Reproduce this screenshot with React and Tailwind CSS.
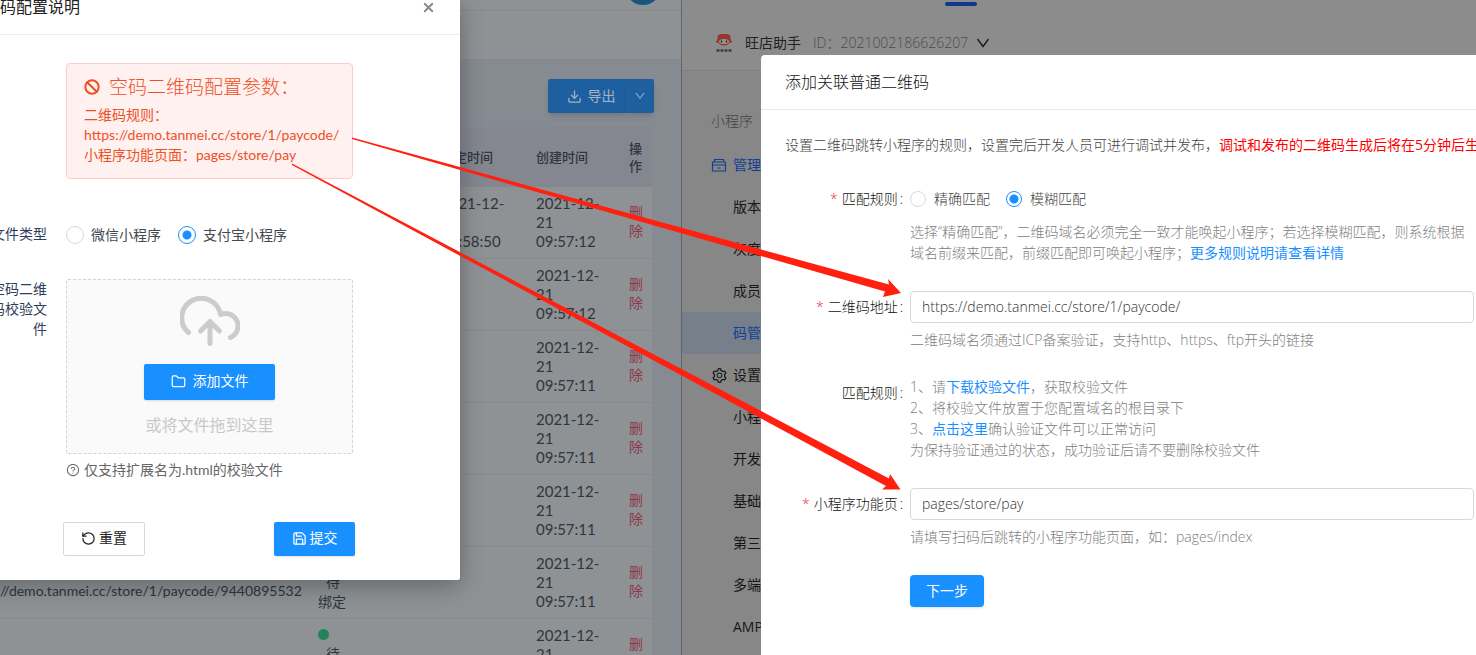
import {
  AiOutlineDown,
  AiOutlineQuestionCircle,
  AiOutlineSetting,
} from "react-icons/ai";
import { FiDownload, FiSave } from "react-icons/fi";
import { Ban, Folder, RotateCcw, X } from "lucide-react";

const rows = [
  { bound: "2021-12-21 09:58:50", created: "2021-12-21 09:57:12" },
  { created: "2021-12-21 09:57:12" },
  { created: "2021-12-21 09:57:11" },
  { created: "2021-12-21 09:57:11" },
  { created: "2021-12-21 09:57:11" },
  {
    url: "//demo.tanmei.cc/store/1/paycode/9440895532",
    waiting: true,
    created: "2021-12-21 09:57:11",
  },
  { waiting: true, created: "2021-12-21 09:57:11" },
];

const menu = [
  { text: "管理", icon: "box" },
  { text: "版本" },
  { text: "灰度" },
  { text: "成员" },
  { text: "码管", active: true },
  { text: "设置", icon: "gear" },
  { text: "小程" },
  { text: "开发" },
  { text: "基础" },
  { text: "第三" },
  { text: "多端" },
  { text: "AMP" },
];

function BoxIcon() {
  return (
    <svg viewBox="0 0 16 16" className="h-4 w-4" fill="none" stroke="currentColor" strokeWidth="1.2">
      <path d="M1.500 5h13v9h-13zM3.500 5V2.500h9V5M1.500 8h13M6.500 11h3" />
    </svg>
  );
}

function CloudIcon() {
  return (
    <svg
      viewBox="0 0 60 50"
      className="h-[50px] w-[60px] text-[#cccccc]"
      fill="none"
      stroke="currentColor"
      strokeWidth="5"
      strokeLinecap="round"
      strokeLinejoin="round"
    >
      <path d="M8.500 36.500A19.500 19.500 0 1 1 40.500 18.500A12.500 12.500 0 0 1 50.500 41.500" />
      <path d="M30 47.500V26M20.500 35L30 25.500L39.500 35" />
    </svg>
  );
}

function ShopLogo() {
  return (
    <svg viewBox="0 0 18 20" className="h-5 w-[18px]">
      <path d="M2.500 8V4Q3 1 6 1h6q3 0 3.500 3v4z" fill="#94392d" />
      <path d="M0.500 9L3 6v4zM17.500 9L15 6v4z" fill="#94392d" />
      <ellipse cx="9" cy="8.500" rx="6" ry="4" fill="#94392d" />
      <ellipse cx="9" cy="8.500" rx="5" ry="2.600" fill="#969087" />
      <path d="M6.500 7.500v2M11.500 7.500v2" stroke="#222" strokeWidth="1.200" />
      <path d="M1.500 17.500H16.500" stroke="#3d3d3d" strokeWidth="2.500" strokeDasharray="3 1" />
    </svg>
  );
}

function AdminWindow() {
  return (
    <section className="relative min-h-screen w-[681px] shrink-0 bg-[#868a91] font-['Lato','Noto_Sans_CJK_SC',sans-serif] text-[#30353f]">
      <div className="flex h-[11px] items-end justify-end border-b border-[#868a8c] bg-[#8e9294] pr-5">
        <span className="mb-[5px] h-9 w-9 shrink-0 rounded-full bg-[#17557f]" />
      </div>
      <div className="h-12 bg-[#8e9294]" />

      <div className="flex justify-end pr-[27px] pt-5">
        <button className="flex h-[34px] w-[78px] items-center justify-center gap-[6px] rounded-l-xs bg-[#1e609f] pl-2 text-sm text-[#a5b4c3] shadow-md">
          <FiDownload size={15} />
          导出
        </button>
        <button
          className="flex h-[34px] w-7 items-center justify-center rounded-r-xs bg-[#1e609f] text-[#a5b4c3] shadow-md"
          aria-label="more"
        >
          <AiOutlineDown size={12} />
        </button>
      </div>

      <div className="pr-[29px]">
        <table className="mt-[14px] w-full table-fixed border-separate border-spacing-0 text-left text-[15px] leading-[19px]">
          <colgroup>
            <col />
            <col className="w-[123px]" />
            <col className="w-[95px]" />
            <col className="w-[93px]" />
            <col className="w-[23px]" />
          </colgroup>
          <thead className="bg-[#848790] text-[13px] leading-[18px]">
            <tr className="h-[60px]">
              <th />
              <th />
              <th className="font-medium">绑定时间</th>
              <th className="font-medium">创建时间</th>
              <th className="pr-2 font-medium">操作</th>
            </tr>
          </thead>
          <tbody className="bg-[#8e9294]">
            {rows.map((row, i) => (
              <tr key={i} className="h-[72px]">
                <td className="border-b border-[#868a8d] pt-4 text-sm">{row.url}</td>
                <td className="border-b border-[#868a8d] pt-1 text-sm">
                  {row.waiting && (
                    <div className="w-8">
                      <span className="block h-[11px] w-[11px] rounded-full bg-[#24825d]" />
                      <span className="mt-1 block pl-2">待</span>
                      <span>绑定</span>
                    </div>
                  )}
                </td>
                <td className="border-b border-[#868a8d] pr-6">{row.bound}</td>
                <td className="border-b border-[#868a8d] pr-5">{row.created}</td>
                <td className="border-b border-[#868a8d] pb-1">
                  <a href="#" className="block w-4 text-sm leading-[19px] text-[#8f384a]">
                    删除
                  </a>
                </td>
              </tr>
            ))}
          </tbody>
        </table>
      </div>

      <ConfigDialog />
    </section>
  );
}

function ConfigDialog() {
  return (
    <div
      role="dialog"
      className="absolute -left-10 top-0 w-[500px] rounded-b-xs bg-white pb-6 shadow-[0_6px_24px_rgba(0,0,0,0.3)]"
    >
      <div className="flex h-[35px] items-start justify-between border-b border-[#ececec] pl-10 pr-6">
        <h2 className="text-base leading-[14px] text-[#222222]">码配置说明</h2>
        <button className="text-[#888888]" aria-label="close">
          <X size={15} strokeWidth={3} />
        </button>
      </div>

      <div className="ml-[106px] mr-[107px] mt-7 rounded-sm border border-[#ffccc7] bg-[#fff1f0] pb-[13px] pl-[17px] pt-[11px] text-sm leading-5 text-[#ed5025]">
        <h3 className="mb-[6px] flex items-center gap-[9px] text-[19px] font-light leading-6">
          <Ban size={16} strokeWidth={3} />
          空码二维码配置参数：
        </h3>
        <p>二维码规则：</p>
        <p>https://demo.tanmei.cc/store/1/paycode/</p>
        <p>小程序功能页面：pages/store/pay</p>
      </div>

      <fieldset className="mt-11 flex h-6 items-center text-sm text-[#444950]">
        <span className="w-[87px] pb-[2px] text-right leading-5 text-[#2f3d5c]">文件类型</span>
        <label className="ml-[19px] flex items-center gap-[7px]">
          <Radio name="fileType" size="lg" />
          微信小程序
        </label>
        <label className="ml-[17px] flex items-center gap-[7px]">
          <Radio name="fileType" size="lg" checked />
          支付宝小程序
        </label>
      </fieldset>

      <div className="mt-8 flex text-sm">
        <span className="w-[87px] pl-[30px] text-right leading-5 text-[#2f3d5c]">
          空码二维码校验文件
        </span>
        <div className="ml-[19px] w-[287px]">
          <div className="flex h-[175px] flex-col items-center rounded-xs border border-dashed border-[#d4d4d4] bg-[#fafafa] pt-4">
            <CloudIcon />
            <button className="mt-[18px] flex h-9 w-[131px] items-center justify-center gap-[7px] rounded-xs bg-[#1890ff] pb-[2px] text-white shadow">
              <Folder size={15} strokeWidth={2} />
              添加文件
            </button>
            <p className="mt-[13px] text-base text-[#c8c8c8]">或将文件拖到这里</p>
          </div>
          <p className="mt-[6px] flex items-center gap-1 leading-5 text-[#666666]">
            <AiOutlineQuestionCircle size={14} />
            仅支持扩展名为.html的校验文件
          </p>
        </div>
      </div>

      <div className="ml-[103px] mr-[105px] mt-[42px] flex justify-between text-sm">
        <button className="flex h-[34px] w-[82px] items-center justify-center gap-[3px] rounded-xs border border-[#d9d9d9] pb-[2px] text-[#222222]">
          <RotateCcw size={15} strokeWidth={2} />
          重置
        </button>
        <button className="flex h-[34px] w-[81px] items-center justify-center gap-[3px] rounded-xs bg-[#1890ff] pb-[2px] text-white shadow">
          <FiSave size={15} />
          提交
        </button>
      </div>
    </div>
  );
}

function Radio({ name, size, checked }) {
  return (
    <input
      type="radio"
      name={name}
      defaultChecked={checked}
      className={
        (size === "lg" ? "h-[18px] w-[18px] " : "h-4 w-4 ") +
        "shrink-0 appearance-none rounded-full border border-[#d9d9d9] bg-white checked:border-[#1890ff] checked:bg-[radial-gradient(circle,#1890ff_4px,#ffffff_5px)]"
      }
    />
  );
}

function Label({ text, required, htmlFor }) {
  return (
    <label
      htmlFor={htmlFor}
      className="block w-[142px] shrink-0 whitespace-nowrap text-right text-[#111111]"
    >
      {required && <span className="mr-1 text-[#f5222d]">*</span>}
      {text}
      <span className="ml-[2px]">:</span>
    </label>
  );
}

function ConsoleWindow() {
  return (
    <section className="relative min-h-screen min-w-0 flex-1 border-l border-[#5f666b] bg-[#878787] text-sm font-light">
      <header className="h-[71px] border-b border-[#7f7f7f] bg-[#8c8c8c]">
        <div className="flex h-4 items-start pl-[263px] pt-[2px]">
          <span className="h-1 w-8 rounded-full bg-[#10368f]" />
        </div>
        <div className="flex h-[54px] items-center pl-[33px]">
          <ShopLogo />
          <span className="ml-3 font-normal text-[#222222]">旺店助手</span>
          <span className="ml-3 text-[#4c4c4c]">ID：2021002186626207</span>
          <svg viewBox="0 0 14 10" className="ml-2 h-[10px] w-[14px]" fill="none" stroke="#1b1b1b" strokeWidth="1.4">
            <path d="M1.500 1L7 8.500L12.500 1" />
          </svg>
        </div>
      </header>

      <nav className="pt-[39px] font-normal text-[#161616]">
        <p className="pl-[29px] font-light leading-[22px] text-[#444444]">小程序</p>
        <ul className="mt-3">
          {menu.map((item) => (
            <li
              key={item.text}
              className={
                item.active ? "bg-[#777f8b] text-[#113f93]" : item.icon === "box" ? "text-[#113f93]" : ""
              }
            >
              <a href="#" className="flex h-[42px] items-center pl-[29px]">
                <span className="w-[22px]">
                  {item.icon === "box" && <BoxIcon />}
                  {item.icon === "gear" && <AiOutlineSetting size={17} />}
                </span>
                {item.text}
              </a>
            </li>
          ))}
        </ul>
      </nav>

      <LinkDialog />
    </section>
  );
}

function LinkDialog() {
  return (
    <div
      role="dialog"
      className="absolute bottom-0 left-[79px] right-0 top-[55px] overflow-hidden rounded-tl bg-white text-[#444444]"
    >
      <h2 className="flex h-[55px] items-center border-b border-[#e8e8e8] pl-6 text-base text-[#111111]">
        添加关联普通二维码
      </h2>

      <p className="mt-6 whitespace-nowrap pl-6 leading-[22px]">
        设置二维码跳转小程序的规则，设置完后开发人员可进行调试并发布，
        <span className="font-normal text-[#ff0000]">
          调试和发布的二维码生成后将在5分钟后生效
        </span>
      </p>

      <form className="pr-[2px] leading-[21px] text-[#808080]">
        <div className="mt-8 flex gap-[7px]">
          <Label text="匹配规则" required />
          <div className="min-w-0 flex-1">
            <div className="flex items-center gap-4 text-[#444444]">
              <label className="flex items-center gap-2">
                <Radio name="match" />
                精确匹配
              </label>
              <label className="flex items-center gap-2">
                <Radio name="match" checked />
                模糊匹配
              </label>
            </div>
            <p className="mt-3">
              选择“精确匹配”，二维码域名必须完全一致才能唤起小程序；若选择模糊匹配，则系统根据域名前缀来匹配，前缀匹配即可唤起小程序；
              <a href="#" className="font-normal text-[#1890ff]">
                更多规则说明请查看详情
              </a>
            </p>
          </div>
        </div>

        <div className="mt-7 flex items-baseline gap-[7px]">
          <Label text="二维码地址" required htmlFor="address" />
          <div className="min-w-0 flex-1">
            <input
              id="address"
              defaultValue="https://demo.tanmei.cc/store/1/paycode/"
              className="h-8 w-full rounded border border-[#d9d9d9] px-[11px] pb-[2px] text-[#333333]"
            />
            <p className="mt-[6px]">二维码域名须通过ICP备案验证，支持http、https、ftp开头的链接</p>
          </div>
        </div>

        <div className="mt-[26px] flex items-start gap-[7px]">
          <div className="pt-[6px]">
            <Label text="匹配规则" />
          </div>
          <div className="min-w-0 flex-1">
            <p>
              1、请
              <a href="#" className="font-normal text-[#1890ff]">
                下载校验文件
              </a>
              ，获取校验文件
            </p>
            <p>2、将校验文件放置于您配置域名的根目录下</p>
            <p>
              3、
              <a href="#" className="font-normal text-[#1890ff]">
                点击这里
              </a>
              确认验证文件可以正常访问
            </p>
            <p>为保持验证通过的状态，成功验证后请不要删除校验文件</p>
          </div>
        </div>

        <div className="mt-7 flex items-baseline gap-[7px]">
          <Label text="小程序功能页" required htmlFor="page" />
          <div className="min-w-0 flex-1">
            <input
              id="page"
              defaultValue="pages/store/pay"
              className="h-8 w-full rounded border border-[#d9d9d9] px-[11px] pb-[2px] text-[#333333]"
            />
            <p className="mt-[6px]">请填写扫码后跳转的小程序功能页面，如：pages/index</p>
            <button
              type="button"
              className="mt-7 h-8 rounded bg-[#1890ff] px-4 pb-[2px] font-normal text-white shadow-sm"
            >
              下一步
            </button>
          </div>
        </div>
      </form>
    </div>
  );
}

// red pointers from the config values to the matching form fields
function Arrows() {
  return (
    <svg
      viewBox="0 0 1476 655"
      className="pointer-events-none absolute left-0 top-0 h-[655px] w-[1476px]"
      fill="#ff2010"
    >
      <path d="M352 137.500L889 284.500L888 279L901 293L883 297L885 291.500L352 139Z" />
      <path d="M292 163.500L889 478.500L890 474L900.500 489.500L882 489.500L886 486L292 165Z" />
    </svg>
  );
}

export default function App() {
  return (
    <main className="relative flex h-screen min-h-[655px] overflow-hidden font-['Open_Sans','Noto_Sans_CJK_SC',sans-serif]">
      <AdminWindow />
      <ConsoleWindow />
      <Arrows />
    </main>
  );
}
